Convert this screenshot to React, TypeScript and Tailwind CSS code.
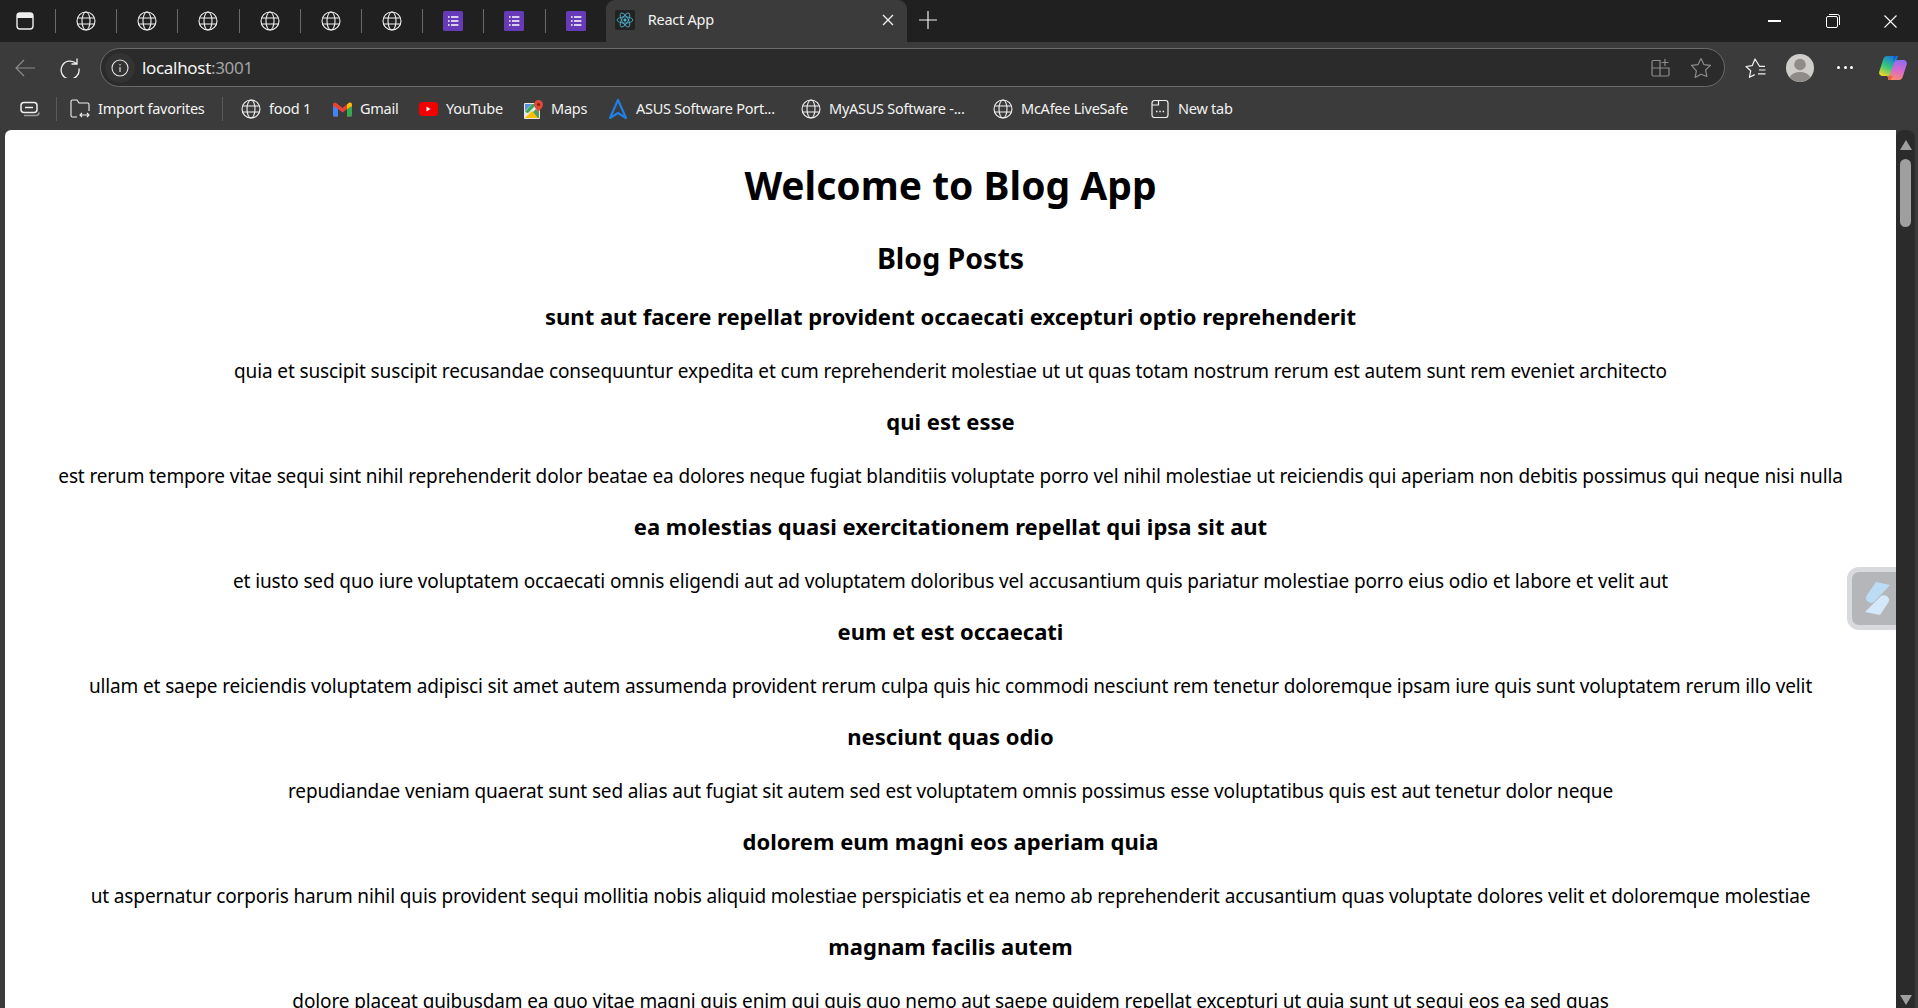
import React from "react";

const posts = [
  ["sunt aut facere repellat provident occaecati excepturi optio reprehenderit", "quia et suscipit suscipit recusandae consequuntur expedita et cum reprehenderit molestiae ut ut quas totam nostrum rerum est autem sunt rem eveniet architecto"],
  ["qui est esse", "est rerum tempore vitae sequi sint nihil reprehenderit dolor beatae ea dolores neque fugiat blanditiis voluptate porro vel nihil molestiae ut reiciendis qui aperiam non debitis possimus qui neque nisi nulla"],
  ["ea molestias quasi exercitationem repellat qui ipsa sit aut", "et iusto sed quo iure voluptatem occaecati omnis eligendi aut ad voluptatem doloribus vel accusantium quis pariatur molestiae porro eius odio et labore et velit aut"],
  ["eum et est occaecati", "ullam et saepe reiciendis voluptatem adipisci sit amet autem assumenda provident rerum culpa quis hic commodi nesciunt rem tenetur doloremque ipsam iure quis sunt voluptatem rerum illo velit"],
  ["nesciunt quas odio", "repudiandae veniam quaerat sunt sed alias aut fugiat sit autem sed est voluptatem omnis possimus esse voluptatibus quis est aut tenetur dolor neque"],
  ["dolorem eum magni eos aperiam quia", "ut aspernatur corporis harum nihil quis provident sequi mollitia nobis aliquid molestiae perspiciatis et ea nemo ab reprehenderit accusantium quas voluptate dolores velit et doloremque molestiae"],
  ["magnam facilis autem", "dolore placeat quibusdam ea quo vitae magni quis enim qui quis quo nemo aut saepe quidem repellat excepturi ut quia sunt ut sequi eos ea sed quas"],
];

const Globe = ({ s = 20 }: { s?: number }) => (
  <svg width={s} height={s} viewBox="0 0 20 20" fill="none" stroke="#f2f2f2" strokeWidth="1.1">
    <circle cx="10" cy="10" r="9" />
    <ellipse cx="10" cy="10" rx="4" ry="9" />
    <path d="M1.6 7h16.8M1.6 13h16.8" />
  </svg>
);

const Forms = () => (
  <svg width="20" height="20" viewBox="0 0 20 20">
    <rect width="20" height="20" rx="1.5" fill="#673ab7" />
    <path d="M5 6h1.6M8 6h7.4M5 10h1.6M8 10h7.4M5 14h1.6M8 14h7.4" stroke="#fff" strokeWidth="1.7" />
  </svg>
);

const ReactIcon = () => (
  <span className="flex h-[20px] w-[20px] items-center justify-center rounded-[2px] bg-[#222]">
    <svg width="18" height="18" viewBox="-12 -12 24 24" fill="none" stroke="#4fb5d0" strokeWidth="1.1">
      <circle r="2" fill="#4fb5d0" stroke="none" />
      <ellipse rx="10.5" ry="4.2" />
      <ellipse rx="10.5" ry="4.2" transform="rotate(60)" />
      <ellipse rx="10.5" ry="4.2" transform="rotate(120)" />
    </svg>
  </span>
);

const Tab = ({ children, sep = true }: { children: React.ReactNode; sep?: boolean }) => (
  <div className="flex h-[42px] w-[61.2px] items-center justify-center">
    <div className={sep ? "flex h-[24px] w-[61.2px] items-center justify-center border-r border-[#6a6a6a]" : "flex w-[61.2px] justify-center"}>{children}</div>
  </div>
);

const Mark = ({ icon, label, w }: { icon: React.ReactNode; label: string; w: number }) => (
  <div className="flex h-[32px] items-center gap-[8px]" style={{ width: w }}>
    <span className="flex w-[20px] shrink-0 justify-center">{icon}</span>
    <span className="whitespace-nowrap text-[14.5px] tracking-[-0.25px] text-[#f3f3f3]">{label}</span>
  </div>
);

export default function App() {
  return (
    <div className="relative flex h-screen w-full flex-col overflow-hidden bg-[#3b3b3b] font-['Noto_Sans','Liberation_Sans',sans-serif]">
      {/* title bar */}
      <div className="flex h-[42px] shrink-0 items-center bg-[#202020]">
        <div className="flex h-[42px] w-[56px] items-center justify-center">
          <div className="flex h-[24px] w-[56px] items-center border-r border-[#6a6a6a] pl-[16px]">
            <svg width="18" height="18" viewBox="0 0 18 18" fill="none">
              <rect x="1" y="1" width="16" height="16" rx="3" stroke="#eee" strokeWidth="1.4" />
              <path d="M1 2.5a1.5 1.5 0 0 1 1.5-1.5h13a1.5 1.5 0 0 1 1.5 1.5V6H1z" fill="#eee" />
            </svg>
          </div>
        </div>
        {[0, 1, 2, 3, 4, 5].map((i) => (
          <Tab key={i}><Globe /></Tab>
        ))}
        <Tab><Forms /></Tab>
        <Tab><Forms /></Tab>
        <Tab sep={false}><Forms /></Tab>
        <div className="-ml-[1px] flex h-[42px] w-[301px] items-center rounded-t-[9px] bg-[#3b3b3b] pb-[2px] pl-[9px] pr-[13px]">
          <ReactIcon />
          <span className="ml-[13px] text-[14.5px] tracking-[-0.25px] text-[#f3f3f3]">React App</span>
          <svg className="ml-auto" width="12" height="12" viewBox="0 0 12 12" stroke="#f0f0f0" strokeWidth="1.3">
            <path d="M1 1l10 10M11 1L1 11" />
          </svg>
        </div>
        <svg className="ml-[12px] mb-[2px]" width="18" height="18" viewBox="0 0 18 18" stroke="#f0f0f0" strokeWidth="1.2">
          <path d="M9 0v18M0 9h18" />
        </svg>
        <div className="ml-auto flex items-center pr-[21px]">
          <div className="h-[1.5px] w-[13px] bg-white" />
          <svg className="ml-[45px]" width="14" height="14" viewBox="0 0 14 14" fill="none" stroke="#fff" strokeWidth="1">
            <rect x="0.5" y="2.5" width="11" height="11" rx="1.5" />
            <path d="M3 .5h8.5a2 2 0 0 1 2 2V11" />
          </svg>
          <svg className="ml-[44px]" width="13" height="13" viewBox="0 0 13 13" stroke="#fff" strokeWidth="1.1">
            <path d="M.5.5l12 12M12.5.5l-12 12" />
          </svg>
        </div>
      </div>

      {/* toolbar */}
      <div className="flex h-[45px] shrink-0 items-center bg-[#3b3b3b] pt-[6px]">
        <svg className="ml-[15px]" width="20" height="18" viewBox="0 0 20 18" fill="none" stroke="#8a8a8a" strokeWidth="1.2">
          <path d="M20 9H1M9 1L1 9l8 8" />
        </svg>
        <svg className="ml-[25px]" width="20" height="20" viewBox="0 0 20 20" fill="none" stroke="#f2f2f2" strokeWidth="1.3">
          <path d="M17 .5v5.500h-5.500M16.300 5.500A9 9 0 1 0 19 10.500" />
        </svg>
        <div className="ml-[20px] flex h-[39px] flex-1 items-center rounded-full border border-[#6b6b6b] bg-[#2b2b2b] pl-[4px]">
          <span className="flex h-[30px] w-[30px] items-center justify-center rounded-full bg-[#333]">
            <svg width="18" height="18" viewBox="0 0 18 18" fill="none" stroke="#e6e6e6" strokeWidth="1.1">
              <circle cx="9" cy="9" r="8" />
              <path d="M9 8v5M9 5v1.400" />
            </svg>
          </span>
          <span className="ml-[7px] text-[17px] tracking-[-0.32px] text-[#f5f5f5]">localhost<span className="text-[#a3a3a3]">:3001</span></span>
          <svg className="ml-auto" width="19" height="19" viewBox="0 0 19 19" fill="none" stroke="#8d8d8d" strokeWidth="1.2">
            <path d="M9 2.500H2.500A1.500 1.500 0 0 0 1 4v6h8zM1 10v6.500A1.500 1.500 0 0 0 2.500 18H9v-8zM9 10h9v6.500a1.500 1.500 0 0 1-1.500 1.500H9zM14 1v7M10.500 4.500h7" />
          </svg>
          <svg className="ml-[20px] mr-[12px]" width="22" height="21" viewBox="0 0 22 21" fill="none" stroke="#8d8d8d" strokeWidth="1.2">
            <path d="M11 1.500l2.900 6.100 6.600.8-4.900 4.500 1.300 6.600L11 17.200l-5.900 3.300 1.300-6.600L1.500 8.400l6.600-.8z" strokeLinejoin="round" />
          </svg>
        </div>
        <svg className="ml-[20px]" width="21" height="20" viewBox="0 0 21 20" fill="none" stroke="#f2f2f2" strokeWidth="1.2">
          <path d="M20 8.300h-5.500L10 1 7.300 7.600l-6.300.9 4.700 4.300-1.300 6.500 5.300-2.700M14 12h6.500M13 15.800h7.500" strokeLinejoin="round" />
        </svg>
        <svg className="ml-[20px]" width="28" height="28" viewBox="0 0 28 28">
          <circle cx="14" cy="14" r="14" fill="#cfcdca" />
          <circle cx="14" cy="10.500" r="5.800" fill="#8f8b88" />
          <path d="M3.600 23.300C6 19.500 9.500 18 14 18s8 1.500 10.400 5.300A14 14 0 0 1 3.600 23.300z" fill="#8f8b88" />
        </svg>
        <div className="ml-[23px] flex gap-[3.5px]">
          <i className="h-[3px] w-[3px] rounded-full bg-white" />
          <i className="h-[3px] w-[3px] rounded-full bg-white" />
          <i className="h-[3px] w-[3px] rounded-full bg-white" />
        </div>
        <svg className="ml-[26px] mr-[11px]" width="28" height="26" viewBox="0 0 28 26" fill="none">
          <defs>
            <linearGradient id="cpa" x1="0.2" y1="1" x2="0.7" y2="0">
              <stop offset="0" stopColor="#f2d52e" />
              <stop offset="0.45" stopColor="#38c878" />
              <stop offset="1" stopColor="#1478e0" />
            </linearGradient>
            <linearGradient id="cpb" x1="0.6" y1="0" x2="0.4" y2="1">
              <stop offset="0" stopColor="#8f6cf0" />
              <stop offset="0.5" stopColor="#d868d0" />
              <stop offset="1" stopColor="#f58a70" />
            </linearGradient>
          </defs>
          <path d="M8 1h11l-6 17c-.7 2-2 3-4 3H3.500C1 21-.4 18.700.300 16.500L4 5c.7-2.500 2-4 4-4z" fill="url(#cpa)" />
          <path d="M20 25H9l6-17c.7-2 2-3 4-3h5.500c2.500 0 3.900 2.300 3.200 4.500L24 21c-.7 2.500-2 4-4 4z" fill="url(#cpb)" />
          <path d="M8 21h6l-2.500 4H10z" fill="#f2603c" />
          <path d="M14 6.500L17.500 1H15z" fill="#1d4fc4" />
        </svg>
      </div>

      {/* favorites bar */}
      <div className="flex h-[43px] shrink-0 items-center pt-[1px]">
        <svg className="ml-[20px]" width="20" height="16" viewBox="0 0 20 16" fill="none" stroke="#f0f0f0" strokeWidth="1.5">
          <rect x="1" y="1.500" width="16" height="10" rx="3" />
          <path d="M5 6.500h8" />
          <path d="M4 14.500h12a3 3 0 0 0 3-3" stroke="#9a9a9a" />
        </svg>
        <div className="ml-[16px] h-[24px] w-px bg-[#5a5a5a]" />
        <div className="ml-[13px] w-[152px]">
          <Mark w={152} label="Import favorites" icon={
            <svg width="20" height="20" viewBox="0 0 20 20" fill="none" stroke="#f0f0f0" strokeWidth="1.1">
              <path d="M7 18H2.500A1.500 1.500 0 0 1 1 16.500v-14A1.500 1.500 0 0 1 2.500 1H7l2 3h8.500A1.500 1.500 0 0 1 19 5.500V12" />
              <path d="M10 16h9M12 14l-2 2 2 2M17 14l2 2-2 2" />
            </svg>
          } />
        </div>
        <div className="h-[24px] w-px bg-[#5a5a5a]" />
        <div className="ml-[18px] flex items-center">
          <Mark w={91} label="food 1" icon={<Globe />} />
          <Mark w={86} label="Gmail" icon={
            <svg width="19" height="15" viewBox="0 0 19 15">
              <path d="M0 2.500A2 2 0 0 1 3.300 1L9.500 6 15.700 1A2 2 0 0 1 19 2.500V13a1.500 1.500 0 0 1-1.500 1.500H14V7L9.500 10.500 5 7v7.500H1.500A1.500 1.500 0 0 1 0 13z" fill="#ea4335" />
              <path d="M0 4v9a1.500 1.500 0 0 0 1.500 1.500H5V7z" fill="#4285f4" />
              <path d="M14 7v7.500h3.500A1.500 1.500 0 0 0 19 13V4z" fill="#34a853" />
              <path d="M15.700 1A2 2 0 0 1 19 2.500V4l-5 3V2.500z" fill="#fbbc04" />
            </svg>
          } />
          <Mark w={105} label="YouTube" icon={
            <svg width="19" height="14" viewBox="0 0 19 14">
              <rect width="19" height="14" rx="3.500" fill="#f40000" />
              <path d="M7.500 4.500v5l4-2.500z" fill="#fff" />
            </svg>
          } />
          <Mark w={85} label="Maps" icon={
            <svg width="19" height="19" viewBox="0 0 19 19">
              <rect y="3" width="16" height="16" rx="1" fill="#ece8e0" />
              <path d="M1 4h7L1 11z" fill="#5a8fe8" />
              <path d="M8 4h5l-9 9-3-1z" fill="#34a853" />
              <path d="M1 18l7-7 7 7z" fill="#fbbc04" />
              <path d="M12 9l3 3v6h-1l-5-6z" fill="#4d9d62" />
              <path d="M14.500 0A4.500 4.500 0 0 1 19 4.500C19 7.500 15.500 10 14.500 12 13.500 10 10 7.500 10 4.500A4.500 4.500 0 0 1 14.500 0z" fill="#e0493a" />
              <circle cx="14.500" cy="4.500" r="1.600" fill="#8c1c13" />
            </svg>
          } />
          <Mark w={193} label="ASUS Software Port..." icon={
            <svg width="20" height="22" viewBox="0 0 20 22" fill="none" stroke="#1f7fe5" strokeWidth="2.200">
              <path d="M10 2L2 20l8-5 8 5z" strokeLinejoin="round" />
            </svg>
          } />
          <Mark w={192} label="MyASUS Software -..." icon={<Globe />} />
          <Mark w={157} label="McAfee LiveSafe" icon={<Globe />} />
          <Mark w={80} label="New tab" icon={
            <svg width="18" height="20" viewBox="0 0 18 20" fill="none" stroke="#f0f0f0" strokeWidth="1.200">
              <rect x="1" y="1.500" width="16" height="17" rx="2.500" />
              <path d="M1 6h6.500V1.500" />
              <path d="M5 12.500h1.500M8.300 12.500h1.500M11.600 12.500h1.500" strokeWidth="1.600" />
            </svg>
          } />
        </div>
      </div>

      {/* page */}
      <div className="flex min-h-0 flex-1 pl-[5px]">
        <main className="relative min-w-0 flex-1 overflow-hidden rounded-tl-[6px] bg-white text-center text-black">
          <h1 className="mt-[28px] text-[39px] font-bold leading-[53px]">Welcome to Blog App</h1>
          <h2 className="mb-[23.4px] mt-[27px] text-[28.5px] font-bold leading-[40px]">Blog Posts</h2>
          {posts.map(([t, b]) => (
            <section key={t}>
              <h3 className="mt-[21.6px] text-[22px] font-bold leading-[31px]">{t}</h3>
              <p className="mt-[25.4px] text-[19px] leading-[27px] tracking-[-0.13px]">{b}</p>
            </section>
          ))}
          {/* floating extension widget */}
          <div className="absolute left-[1842px] top-[437px] flex h-[63px] w-[61px] items-center justify-center rounded-[12px] border-[5px] border-[#d9dadd] bg-[#b5b6ba]">
            <svg width="28" height="36" viewBox="0 0 28 36">
              <path d="M12 1l14 3L10 21c-3 2-7 0-8-3 0-1 0-3 1-4z" fill="#bcdcf6" />
              <path d="M16 34L1 31 17 15c3-2 7 0 8 3 0 1 0 3-1 4z" fill="#d4e8fa" />
            </svg>
          </div>
        </main>
        <div className="flex w-[19px] shrink-0 flex-col items-center rounded-t-[8px] bg-[#2b2b2b]">
          <div className="mt-[10px] h-0 w-0 border-x-[6px] border-b-[10px] border-x-transparent border-b-[#9f9f9f]" />
          <div className="mt-[9px] h-[68px] w-[11px] rounded-full bg-[#9f9f9f]" />
          <div className="mb-[3px] mt-auto h-0 w-0 border-x-[6px] border-t-[10px] border-x-transparent border-t-[#9f9f9f]" />
        </div>
        <div className="w-[3px] shrink-0" />
      </div>
    </div>
  );
}
